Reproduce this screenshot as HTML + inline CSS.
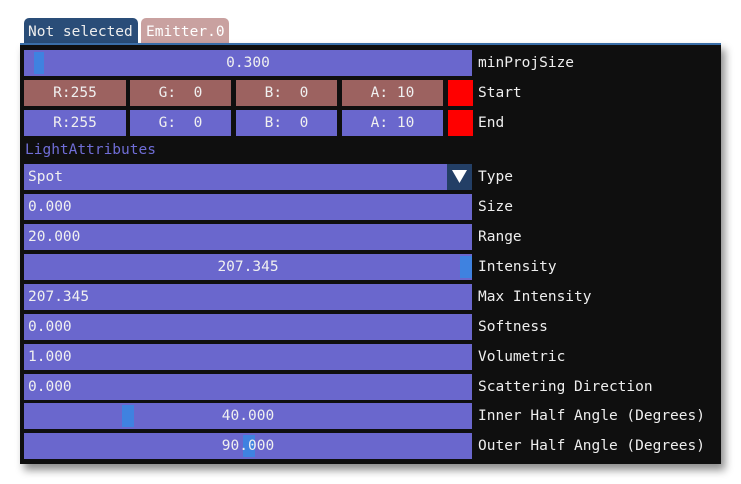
<!DOCTYPE html><html><head><style>
body{margin:0;width:741px;height:484px;background:#fff;position:relative;overflow:hidden;font-family:"DejaVu Sans Mono","Liberation Mono",monospace;font-size:14.5px;}
.a{position:absolute;}
.panel{left:20px;top:43px;width:701px;height:421px;background:#0f0f0f;border-top:2px solid #3a6ea8;box-shadow:4px 6px 8px rgba(0,0,0,.45);box-sizing:border-box;}
.b{position:absolute;height:26px;background:#6a67cd;color:#f0f0f0;line-height:27px;white-space:pre;}
.r{background:#9c6260;}
.l{position:absolute;left:478px;color:#eee;line-height:27px;white-space:pre;}
.g{position:absolute;background:#3f82e0;}
</style></head><body>
<div class="a" style="left:24px;top:18px;width:114px;height:26px;background:#2a4d78;border-radius:5px 5px 0 0;color:#eee;line-height:28px;padding-left:4px;box-sizing:border-box">Not selected</div>
<div class="a" style="left:141px;top:18px;width:88px;height:26px;background:#c9a1a0;border-radius:5px 5px 0 0;color:#fff;line-height:28px;padding-left:5px;box-sizing:border-box">Emitter.0</div>
<div class="a panel"></div>

<div class="b" style="left:24px;top:50px;width:448px;text-align:center">0.300</div>
<div class="g" style="left:34px;top:52px;width:10px;height:22px"></div>
<div class="l" style="top:50px">minProjSize</div>

<div class="b r" style="left:24px;top:80px;width:102px;text-align:center">R:255</div>
<div class="b r" style="left:130px;top:80px;width:101px;text-align:center">G:  0</div>
<div class="b r" style="left:236px;top:80px;width:101px;text-align:center">B:  0</div>
<div class="b r" style="left:342px;top:80px;width:101px;text-align:center">A: 10</div>
<div class="a" style="left:448px;top:80px;width:25px;height:26px;background:#f00"></div>
<div class="l" style="top:80px">Start</div>

<div class="b" style="left:24px;top:110px;width:102px;text-align:center">R:255</div>
<div class="b" style="left:130px;top:110px;width:101px;text-align:center">G:  0</div>
<div class="b" style="left:236px;top:110px;width:101px;text-align:center">B:  0</div>
<div class="b" style="left:342px;top:110px;width:101px;text-align:center">A: 10</div>
<div class="a" style="left:448px;top:110px;width:25px;height:26px;background:#f00"></div>
<div class="l" style="top:110px">End</div>

<div class="a" style="left:25px;top:137px;line-height:27px;color:#6f6dd6">LightAttributes</div>

<div class="b" style="left:24px;top:164px;width:448px;padding-left:4px;box-sizing:border-box">Spot</div>
<div class="a" style="left:447px;top:164px;width:25px;height:26px;background:#233f66"></div>
<svg class="a" style="left:452px;top:170px" width="15" height="13"><polygon points="0,0 15,0 7.5,13" fill="#fff"/></svg>
<div class="l" style="top:164px">Type</div>

<div class="b" style="left:24px;top:194px;width:448px;padding-left:4px;box-sizing:border-box">0.000</div><div class="l" style="top:194px">Size</div>
<div class="b" style="left:24px;top:224px;width:448px;padding-left:4px;box-sizing:border-box">20.000</div><div class="l" style="top:224px">Range</div>
<div class="b" style="left:24px;top:254px;width:448px;text-align:center">207.345</div>
<div class="g" style="left:460px;top:256px;width:12px;height:22px"></div>
<div class="l" style="top:254px">Intensity</div>
<div class="b" style="left:24px;top:284px;width:448px;padding-left:4px;box-sizing:border-box">207.345</div><div class="l" style="top:284px">Max Intensity</div>
<div class="b" style="left:24px;top:314px;width:448px;padding-left:4px;box-sizing:border-box">0.000</div><div class="l" style="top:314px">Softness</div>
<div class="b" style="left:24px;top:344px;width:448px;padding-left:4px;box-sizing:border-box">1.000</div><div class="l" style="top:344px">Volumetric</div>
<div class="b" style="left:24px;top:374px;width:448px;padding-left:4px;box-sizing:border-box">0.000</div><div class="l" style="top:374px">Scattering Direction</div>
<div class="b" style="left:24px;top:403px;width:448px"></div>
<div class="g" style="left:122px;top:405px;width:12px;height:22px"></div>
<div class="b" style="left:24px;top:403px;width:448px;text-align:center;background:transparent">40.000</div>
<div class="l" style="top:403px">Inner Half Angle (Degrees)</div>
<div class="b" style="left:24px;top:433px;width:448px"></div>
<div class="g" style="left:243px;top:435px;width:12px;height:22px"></div>
<div class="b" style="left:24px;top:433px;width:448px;text-align:center;background:transparent">90.000</div>
<div class="l" style="top:433px">Outer Half Angle (Degrees)</div>
</body></html>
